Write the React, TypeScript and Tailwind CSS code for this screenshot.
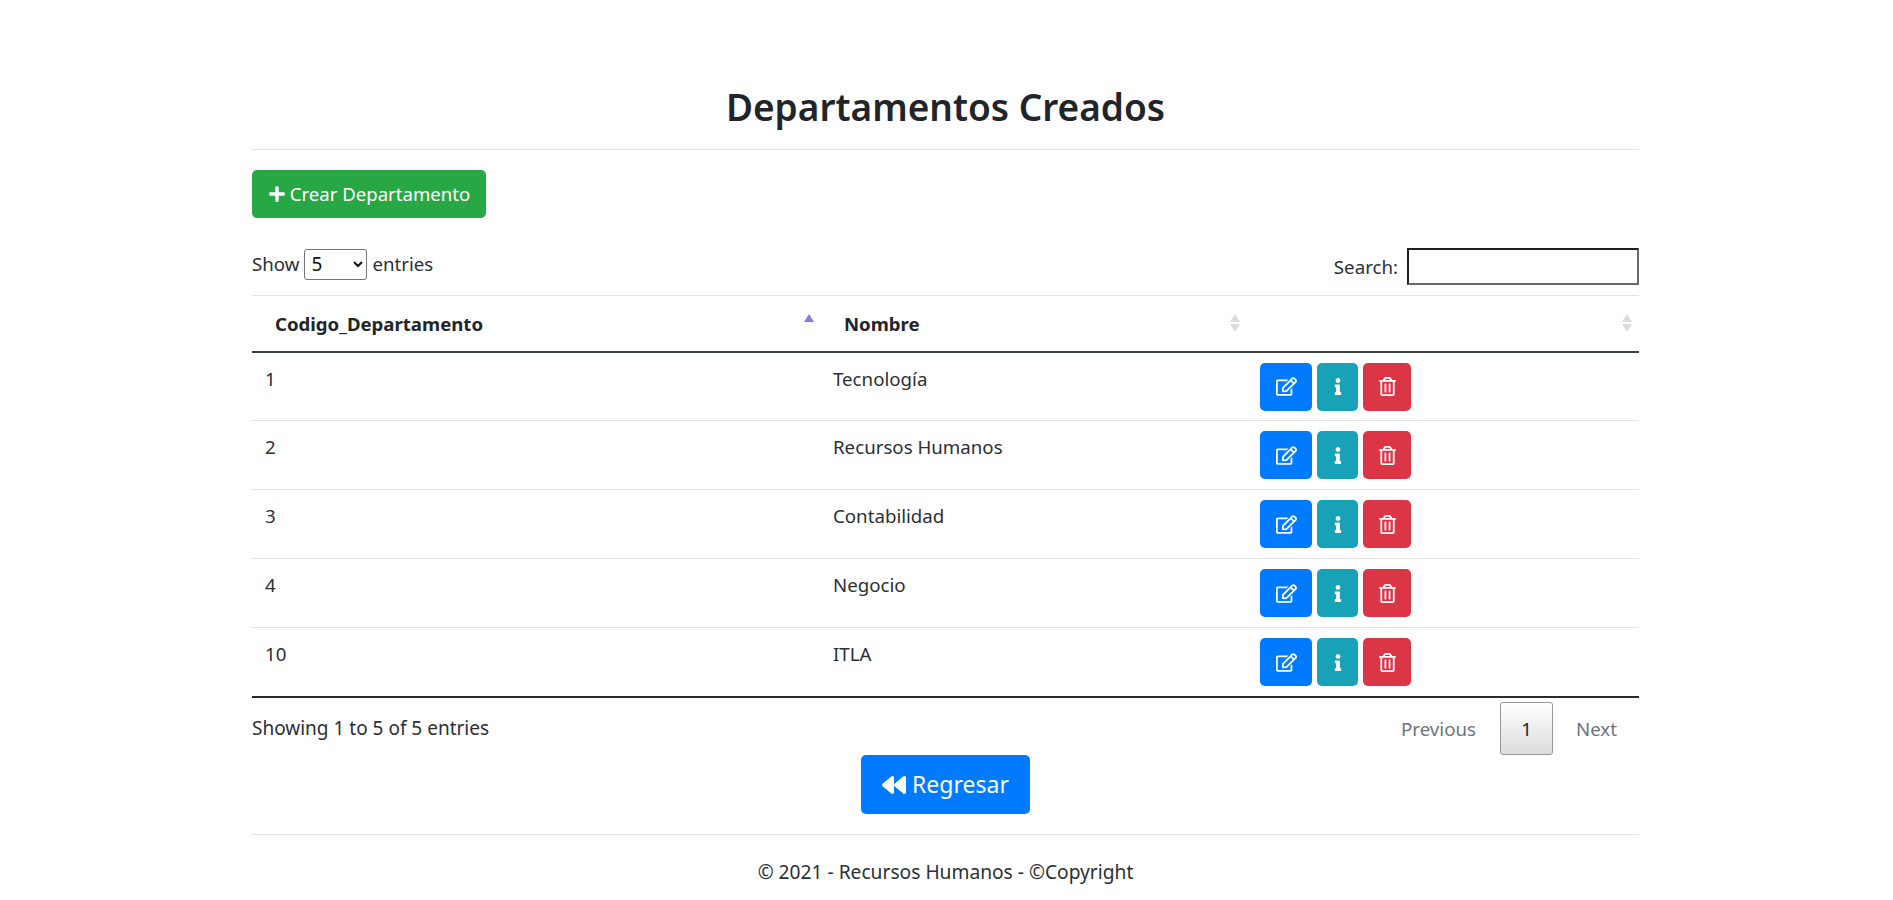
import React from 'react';
import { FaPlus, FaRegEdit, FaInfo, FaRegTrashAlt, FaBackward } from 'react-icons/fa';

const departamentos = [
  { id: 1, nombre: 'Tecnología' },
  { id: 2, nombre: 'Recursos Humanos' },
  { id: 3, nombre: 'Contabilidad' },
  { id: 4, nombre: 'Negocio' },
  { id: 10, nombre: 'ITLA' },
];

function SortIcon({ active }: { active?: boolean }) {
  return (
    <svg width="12" height="20" viewBox="0 0 12 20" className="absolute right-[6px] top-[17px]">
      <path d="M6 1 L11 9 L1 9 Z" fill={active ? '#7f7fe0' : '#dcdcdc'} />
      {!active && <path d="M1 11 L11 11 L6 19 Z" fill="#dcdcdc" />}
    </svg>
  );
}

export default function App() {
  return (
    <div className="min-h-[900px] bg-white pr-[2px] text-[#2b3035] font-['Noto_Sans',sans-serif] text-[18.7px]">
      <div className="mx-auto w-[1387px]">
        <h1 className="pt-[78px] text-center text-[37px] leading-[58px] font-semibold text-[#212529]">Departamentos Creados</h1>
        <hr className="mt-[13px] border-t border-[#e3e3e3]" />

        <button className="mt-[20px] flex h-[48px] w-[234px] items-center justify-center gap-[4px] rounded-[5px] bg-[#28a745] text-[18.6px] text-white">
          <FaPlus className="h-[18px] w-[18px]" />
          Crear Departamento
        </button>

        <div className="mt-[30px] flex h-[47px] items-start justify-between">
          <label className="flex h-[31px] items-center gap-[5px] pt-[1px]">
            Show
            <select className="h-[31px] w-[63px] rounded-[3px] border border-[#767676] bg-white px-[2px] text-[19px] text-[#111111]" defaultValue="5">
              <option>5</option>
            </select>
            entries
          </label>
          <label className="flex items-center gap-[9px]">
            <span className="pt-[2px]">Search:</span>
            <input className="h-[37px] w-[232px] border-2 border-t-[#1f1f1f] border-l-[#1f1f1f] border-r-[#6a6a6a] border-b-[#6a6a6a] bg-white" />
          </label>
        </div>

        <table className="w-full table-fixed border-collapse">
          <colgroup>
            <col className="w-[569px]" />
            <col className="w-[426px]" />
            <col />
          </colgroup>
          <thead>
            <tr className="h-[56px] border-t border-b-2 border-t-[#e3e3e3] border-b-[#3a3f44]">
              <th className="relative pl-[23px] pr-[30px] pt-[2px] text-left font-bold text-[#212529] text-[18.6px]">
                Codigo_Departamento
                <SortIcon active />
              </th>
              <th className="relative pl-[23px] pt-[2px] text-left font-bold text-[#212529] text-[18.6px]">
                Nombre
                <SortIcon />
              </th>
              <th className="relative">
                <SortIcon />
              </th>
            </tr>
          </thead>
          <tbody>
            {departamentos.map((d, i) => (
              <tr key={d.id} className={i < departamentos.length - 1 ? 'h-[69px] border-b border-[#e3e3e3]' : 'h-[69px] border-b-2 border-[#2b2b2b]'}>
                <td className="pl-[13px] pt-[12px] align-top">{d.id}</td>
                <td className="pl-[12px] pt-[12px] align-top">{d.nombre}</td>
                <td className="pl-[13px] pt-[10px] align-top">
                  <div className="flex gap-[5px]">
                    <button className="flex h-[48px] w-[52px] items-center justify-center rounded-[5px] bg-[#007bff] text-white">
                      <FaRegEdit className="h-[19px] w-[21px]" />
                    </button>
                    <button className="flex h-[48px] w-[41px] items-center justify-center rounded-[5px] bg-[#17a2b8] text-white">
                      <FaInfo className="h-[17px] w-[10px]" />
                    </button>
                    <button className="flex h-[48px] w-[48px] items-center justify-center rounded-[5px] bg-[#dc3545] text-white">
                      <FaRegTrashAlt className="h-[19px] w-[17px]" />
                    </button>
                  </div>
                </td>
              </tr>
            ))}
          </tbody>
        </table>

        <div className="flex h-[57px] items-start justify-between pt-[4px]">
          <div className="pt-[12px] text-[19px]">Showing 1 to 5 of 5 entries</div>
          <div className="flex items-center text-[#6c757d]">
            <span className="px-[24px] pt-[3px]">Previous</span>
            <span className="flex h-[53px] w-[53px] items-center justify-center rounded-[3px] border border-[#979797] bg-gradient-to-b from-white to-[#dcdcdc] pt-[2px] text-[#212529]">1</span>
            <span className="pl-[23px] pr-[22px] pt-[3px]">Next</span>
          </div>
        </div>

        <div className="flex justify-center">
          <button className="flex h-[59px] w-[169px] items-center justify-center gap-[6px] rounded-[5px] bg-[#007bff] pt-[1px] text-[23px] text-white">
            <FaBackward className="h-[24px] w-[24px]" />
            Regresar
          </button>
        </div>

        <hr className="mt-[20px] border-t border-[#e3e3e3]" />
        <p className="pt-[23px] text-center text-[19.2px]">© 2021 - Recursos Humanos - ©Copyright</p>
      </div>
    </div>
  );
}
